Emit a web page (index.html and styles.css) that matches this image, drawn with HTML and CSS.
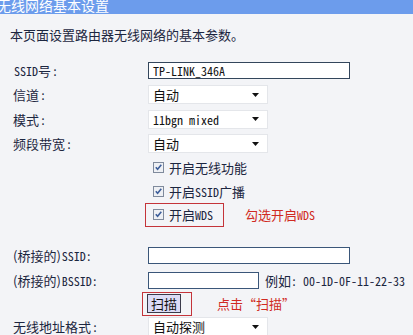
FILE: index.html
```html
<!DOCTYPE html>
<html lang="zh-CN">
<head>
<meta charset="utf-8">
<title>无线网络基本设置</title>
<link rel="stylesheet" href="styles.css">
</head>
<body>
<div class="hdr"><span class="hdr-t">无线网络基本设置</span></div>
<p class="intro">本页面设置路由器无线网络的基本参数。</p>
<div class="form">
  <div class="row r1">
    <div class="lbl"><span class="mono">SSID</span>号<span class="mono">:</span></div>
    <div class="val"><div class="inp w-long dark">TP-LINK_346A</div></div>
  </div>
  <div class="row r2">
    <div class="lbl">信道<span class="mono">:</span></div>
    <div class="val"><div class="sel"><span>自动</span><svg class="arr" width="7" height="4" viewBox="0 0 7 4"><path d="M0 0H7L3.5 4Z" fill="#111"/></svg></div></div>
  </div>
  <div class="row r3">
    <div class="lbl">模式<span class="mono">:</span></div>
    <div class="val"><div class="sel"><span class="mono">11bgn mixed</span><svg class="arr" width="7" height="4" viewBox="0 0 7 4"><path d="M0 0H7L3.5 4Z" fill="#111"/></svg></div></div>
  </div>
  <div class="row r4">
    <div class="lbl">频段带宽<span class="mono">:</span></div>
    <div class="val"><div class="sel"><span>自动</span><svg class="arr" width="7" height="4" viewBox="0 0 7 4"><path d="M0 0H7L3.5 4Z" fill="#111"/></svg></div></div>
  </div>
  <div class="row chk">
    <div class="lbl"></div>
    <div class="val"><span class="cb"><svg width="11" height="11" viewBox="0 0 11 11"><rect x="0.5" y="0.5" width="10" height="10" fill="#eef0f4" stroke="#7f8a9c"/><path d="M2.8 5.2 L4.6 7.3 L8.3 2.8" fill="none" stroke="#3d5e9a" stroke-width="1.6"/></svg></span><span>开启无线功能</span></div>
  </div>
  <div class="row chk">
    <div class="lbl"></div>
    <div class="val"><span class="cb"><svg width="11" height="11" viewBox="0 0 11 11"><rect x="0.5" y="0.5" width="10" height="10" fill="#eef0f4" stroke="#7f8a9c"/><path d="M2.8 5.2 L4.6 7.3 L8.3 2.8" fill="none" stroke="#3d5e9a" stroke-width="1.6"/></svg></span><span>开启<span class="mono">SSID</span>广播</span></div>
  </div>
  <div class="row chk wds">
    <div class="lbl"></div>
    <div class="val">
      <div class="redbox"><span class="cb"><svg width="11" height="11" viewBox="0 0 11 11"><rect x="0.5" y="0.5" width="10" height="10" fill="#eef0f4" stroke="#7f8a9c"/><path d="M2.8 5.2 L4.6 7.3 L8.3 2.8" fill="none" stroke="#3d5e9a" stroke-width="1.6"/></svg></span><span>开启<span class="mono">WDS</span></span></div>
      <span class="note n1">勾选开启<span class="mono">WDS</span></span>
    </div>
  </div>
  <div class="row r-bssid1">
    <div class="lbl">(桥接的)<span class="mono">SSID:</span></div>
    <div class="val"><div class="inp w-long navy"></div></div>
  </div>
  <div class="row r-bssid2">
    <div class="lbl">(桥接的)<span class="mono">BSSID:</span></div>
    <div class="val"><div class="inp w-mid navy"></div><span class="eg">例如<span class="mono">: 00-1D-0F-11-22-33</span></span></div>
  </div>
  <div class="row r-scan">
    <div class="lbl"></div>
    <div class="val">
      <div class="redbox2"><button class="btn" type="button">扫描</button></div>
      <span class="note n2">点击“扫描”</span>
    </div>
  </div>
  <div class="row r-last">
    <div class="lbl">无线地址格式<span class="mono">:</span></div>
    <div class="val"><div class="sel"><span>自动探测</span><svg class="arr" width="7" height="4" viewBox="0 0 7 4"><path d="M0 0H7L3.5 4Z" fill="#111"/></svg></div></div>
  </div>
</div>
</body>
</html>
```
FILE: styles.css
```css
html, body {
  margin: 0;
  padding: 0;
}
body {
  width: 413px;
  height: 335px;
  overflow: hidden;
  background: #f3f4f7;
  font-family: "Noto Sans CJK SC", "Noto Sans", sans-serif;
  font-size: 13px;
  color: #1c2640;
}
.mono {
  font-family: "Noto Sans Mono CJK SC", "Liberation Mono", monospace;
  font-size: 12px;
}
.lbl .mono {
  padding-left: 1px;
}
.hdr {
  height: 14px;
  background: #6c9cec;
  overflow: hidden;
}
.hdr-t {
  display: block;
  margin-left: -3px;
  margin-top: -5px;
  color: #fff;
  font-size: 14px;
  line-height: 20px;
}
.intro {
  margin: 0;
  padding: 0 0 0 10px;
  height: 44px;
  line-height: 42px;
  font-size: 13px;
}
.form {
  display: flex;
  flex-direction: column;
}
.row {
  display: flex;
  align-items: center;
  height: 24.5px;
}
.lbl {
  width: 135px;
  padding-left: 13px;
  flex: none;
  white-space: nowrap;
}
.val {
  display: flex;
  align-items: center;
}
.inp {
  box-sizing: border-box;
  height: 17px;
  background: #fff;
  padding-left: 4px;
  line-height: 15px;
  font-family: "Noto Sans Mono CJK SC", "Liberation Mono", monospace;
  font-size: 12px;
  color: #111;
}
.inp.dark { border: 1px solid #33465c; }
.inp.navy { border: 1px solid #3a5679; }
.w-long { width: 202px; }
.w-mid { width: 111px; }
.sel {
  box-sizing: border-box;
  width: 120px;
  height: 19px;
  background: #fff;
  border: 1px solid #e4e6ea;
  display: flex;
  align-items: center;
  justify-content: space-between;
  padding: 0 8px 0 4px;
  color: #111;
}
.arr { flex: none; }
.chk { height: 23.5px; }
.chk .val { padding-left: 5px; }
.cb {
  display: inline-flex;
  width: 11px;
  height: 11px;
  margin-right: 5px;
}
.wds .val { padding-left: 0; margin-left: -3px; }
.redbox {
  display: flex;
  align-items: center;
  box-sizing: border-box;
  height: 24px;
  width: 79px;
  padding-left: 7px;
  border: 1px solid #c4343a;
}
.note {
  color: #d02a22;
}
.n1 { margin-left: 21px; }
.r-bssid1 { margin-top: 17px; }
.eg {
  margin-left: 6px;
  white-space: nowrap;
}
.redbox2 {
  box-sizing: border-box;
  display: flex;
  align-items: center;
  width: 50px;
  height: 24px;
  margin-left: -6px;
  padding-left: 4px;
  border: 1px solid #c4343a;
}
.btn {
  box-sizing: border-box;
  width: 34px;
  height: 19px;
  padding: 0;
  margin: 0;
  font-family: "Noto Sans CJK SC", sans-serif;
  font-size: 13px;
  line-height: 16px;
  color: #111;
  background: #dcdcf6;
  border: 1px solid #3a3a4a;
  border-radius: 0;
}
.n2 { margin-left: 25px; }
.r-scan { height: 22px; }
.r-last { height: 24px; }
```
